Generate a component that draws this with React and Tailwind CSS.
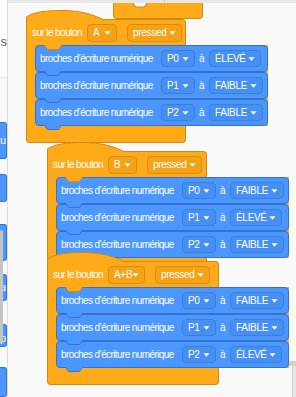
import React from 'react';

const Arrow = () => (
  <svg width="7" height="4" viewBox="0 0 7 4" className="shrink-0">
    <path d="M0.5 0.3 L6.5 0.3 L3.5 3.8 Z" fill="#ffffff" />
  </svg>
);

const Tab = ({ fill, stroke, className }) => (
  <svg width="18" height="5" viewBox="0 0 18 5" className={`absolute top-full z-10 ${className}`}>
    <path d="M0.5 0 L3.5 4.5 L14.5 4.5 L17.5 0" fill={fill} stroke={stroke} />
  </svg>
);

function Dropdown({ label, tone, className }) {
  const toneClass =
    tone === 'orange'
      ? 'h-[18px] bg-[#f4a216] border-[#d98d15]'
      : 'h-[17px] bg-[#4690f4] border-[#3b7fdc]';
  return (
    <div
      className={`flex shrink-0 items-center justify-between rounded-[4px] border px-[5px] ${toneClass} ${className}`}
    >
      <span className="leading-none tracking-[-0.3px]">{label}</span>
      <Arrow />
    </div>
  );
}

function Row({ pin, value }) {
  return (
    <div className="relative flex h-[27px] items-center rounded-[4px] border border-[#3373cc] bg-[#4c97ff] pl-[4px] pr-[4px]">
      <span className="w-[113px] whitespace-nowrap leading-none">broches d’écriture numérique</span>
      <Dropdown label={pin} className="ml-[8px] w-[34px]" />
      <span className="ml-[4px] w-[6px] leading-none">à</span>
      <Dropdown label={value} className={value === 'FAIBLE' ? 'ml-[4px] w-[54px]' : 'ml-[4px] w-[52px]'} />
      <Tab fill="#4c97ff" stroke="#3373cc" className="left-[8px]" />
    </div>
  );
}

function Script({ pos, headWidth, button, buttonWidth, rows }) {
  return (
    <div className={`absolute flex flex-col items-start ${pos}`}>
      <svg width="78" height="10" viewBox="0 0 78 10" className="relative z-[1] -mb-px">
        <path
          d="M0.5 11 L0.5 7 C 7 2, 20 0.5, 36 0.5 C 54 0.5, 66 4, 78 10 L 78 11 Z"
          fill="#ffab19"
          stroke="#cf8b17"
        />
      </svg>
      <div
        className={`relative flex h-[26px] items-center rounded-tr-[4px] border-x border-t border-[#cf8b17] bg-[#ffab19] pl-[5px] ${headWidth}`}
      >
        <span className="w-[55px] whitespace-nowrap leading-none">sur le bouton</span>
        <Dropdown tone="orange" label={button} className={buttonWidth} />
        <Dropdown tone="orange" label="pressed" className="ml-[10px] w-[55px]" />
        <Tab fill="#ffab19" stroke="#cf8b17" className="left-[17px]" />
      </div>
      <div className="flex flex-col border-l border-[#cf8b17] bg-[#ffab19] pl-[8px]">
        {rows.map((r) => (
          <Row key={r[0]} pin={r[0]} value={r[1]} />
        ))}
      </div>
      <div className={`h-[17px] rounded-b-[4px] border-x border-b border-[#cf8b17] bg-[#ffab19] ${headWidth}`} />
    </div>
  );
}

export default function App() {
  return (
    <div className="flex h-[397px] w-[296px] overflow-hidden bg-[#f9f9f9] font-['Liberation_Sans',Arial,sans-serif] text-[10px] tracking-[-0.6px] text-white">
      {/* palette edge */}
      <div className="relative flex w-[8px] shrink-0 flex-col border-r border-[#dcdcdc]">
        <div className="flex h-[83px] justify-end overflow-hidden border-b border-[#e6e6e6] bg-white pt-[32px] text-[13px] tracking-normal text-[#575e75]">
          <span>s</span>
        </div>
        <div className="flex flex-1 flex-col bg-[#f9f9f9] text-[11px] tracking-normal">
          <div className="mt-[44px] flex h-[37px] w-[7px] items-center justify-end overflow-hidden rounded-r-[3px] border-y border-r border-[#3373cc] bg-[#4c97ff]">
            <span>ju</span>
          </div>
          <div className="mt-[15px] h-[28px] w-[7px] rounded-r-[3px] border-y border-r border-[#3373cc] bg-[#4c97ff]" />
          <div className="mt-[22px] h-[37px] w-[7px] rounded-r-[3px] border-y border-r border-[#3373cc] bg-[#4c97ff]" />
          <div className="mt-[13px] flex h-[27px] w-[7px] items-center justify-end overflow-hidden rounded-r-[3px] border-y border-r border-[#3373cc] bg-[#4c97ff]">
            <span>a</span>
          </div>
          <div className="mt-[23px] flex h-[23px] w-[7px] items-end justify-end overflow-hidden rounded-r-[3px] border-y border-r border-[#3373cc] bg-[#4c97ff]">
            <span>p</span>
          </div>
          <div className="mt-[20px] h-[30px] w-[7px] rounded-r-[3px] border-y border-r border-[#3373cc] bg-[#4c97ff]" />
        </div>
        <div className="absolute left-0 top-[230px] h-[113px] w-[3px] rounded-[2px] bg-[#c4c4c4]" />
      </div>

      {/* workspace */}
      <div className="relative flex-1">
        <div className="flex h-[3px] bg-[#e7e7e7]">
          <div className="w-[157px] border-r border-[#d2d2d2]" />
        </div>

        <Script
          pos="left-[18px] top-[10px] z-[1]"
          headWidth="w-[160px]"
          button="A"
          buttonWidth="w-[30px]"
          rows={[
            ['P0', 'ÉLEVÉ'],
            ['P1', 'FAIBLE'],
            ['P2', 'FAIBLE'],
          ]}
        />
        <Script
          pos="left-[39px] top-[142px] z-[2]"
          headWidth="w-[160px]"
          button="B"
          buttonWidth="w-[29px]"
          rows={[
            ['P0', 'FAIBLE'],
            ['P1', 'ÉLEVÉ'],
            ['P2', 'FAIBLE'],
          ]}
        />
        <Script
          pos="left-[39px] top-[252px] z-[3]"
          headWidth="w-[172px]"
          button="A+B"
          buttonWidth="w-[37px]"
          rows={[
            ['P0', 'FAIBLE'],
            ['P1', 'FAIBLE'],
            ['P2', 'ÉLEVÉ'],
          ]}
        />

        {/* bottom of a block scrolled off the top */}
        <div className="absolute left-[105px] top-[3px] z-[4] h-[16px] w-[90px] rounded-b-[4px] border-x border-b border-[#cf8b17] bg-[#ffab19]">
          <svg width="16" height="5" viewBox="0 0 16 5" className="absolute left-[18px] top-0">
            <path d="M0.5 -1 L3.5 4 L12.5 4 L15.5 -1 Z" fill="#f9f9f9" stroke="#cf8b17" />
          </svg>
        </div>

        {/* scrollbar corner */}
        <div className="absolute right-0 top-[361px] h-[5px] w-[7px] bg-[#d2d2d2]" />
        <div className="absolute bottom-0 right-0 top-[366px] w-[4px] border-l border-[#cfcfcf] bg-[#e6e6e6]" />
      </div>
    </div>
  );
}
